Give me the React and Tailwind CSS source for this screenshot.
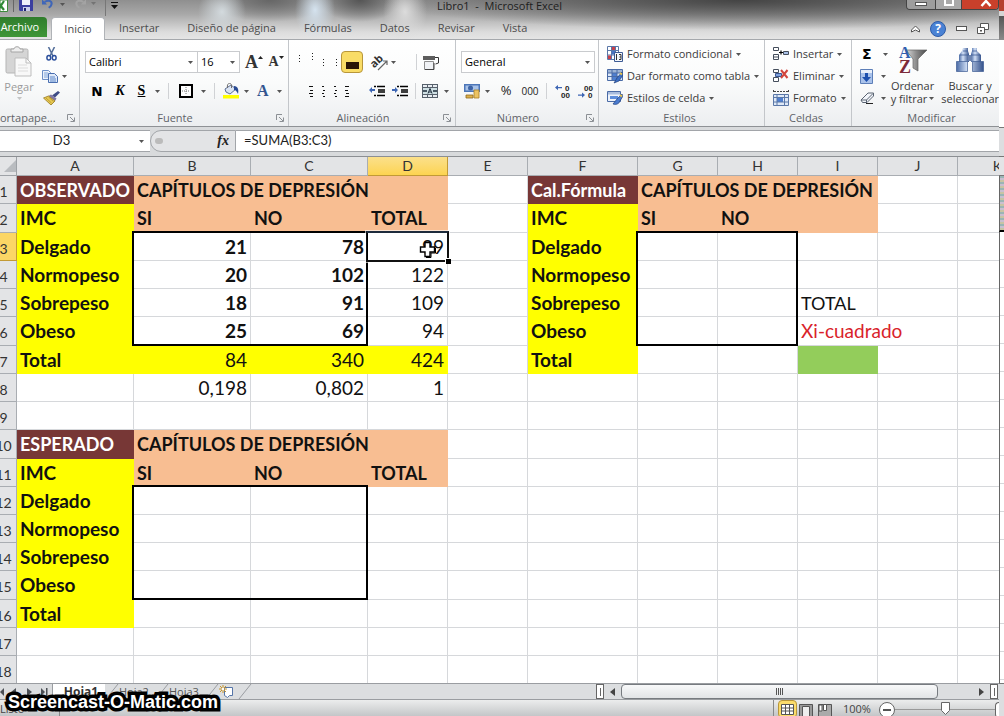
import { useState } from "react";
import clsx from "clsx";

const UI_FONT = "font-['Open_Sans','Noto_Sans',sans-serif]";
const CELL_FONT = "font-['Lato','Open_Sans',sans-serif]";

const TABS = ["Inicio", "Insertar", "Diseño de página", "Fórmulas", "Datos", "Revisar", "Vista"];

const COLUMNS = [
  { name: "A", width: "w-[117px]" },
  { name: "B", width: "w-[117px]" },
  { name: "C", width: "w-[117px]" },
  { name: "D", width: "w-[80px]" },
  { name: "E", width: "w-[80px]" },
  { name: "F", width: "w-[110px]" },
  { name: "G", width: "w-[80px]" },
  { name: "H", width: "w-[80px]" },
  { name: "I", width: "w-[80px]" },
  { name: "J", width: "w-[80px]" },
  { name: "K", width: "w-[80px]" },
];

// cell looks
const blank = { v: "" };
const title = (v) => ({ v, look: "bg-[#773736] border-[#773736] text-white text-lg font-bold" });
const yellow = (v) => ({ v, look: "bg-[#ffff00] border-[#ffff00] font-bold" });
const peach = (v, span) => ({ v, span, look: "bg-[#f8be92] border-[#f8be92] text-lg font-bold" });
const num = (v) => ({ v, look: "text-right" });
const boldNum = (v) => ({ v, look: "text-right font-bold" });
const totalNum = (v) => ({ v, look: "text-right bg-[#ffff00] border-[#ffff00]" });
const blanks = (n) => Array(n).fill(blank);

const ROWS = [
  [title("OBSERVADO"), peach("CAPÍTULOS DE DEPRESIÓN", 3), blank, title("Cal.Fórmula"), peach("CAPÍTULOS DE DEPRESIÓN", 3), ...blanks(2)],
  [yellow("IMC"), peach("SI"), peach("NO"), peach("TOTAL"), blank, yellow("IMC"), peach("SI"), peach("NO"), peach(""), ...blanks(2)],
  [yellow("Delgado"), { ...boldNum("21"), box: "wide" }, boldNum("78"), { ...num("99"), active: true }, blank, yellow("Delgado"), { v: "", box: "narrow" }, ...blanks(4)],
  [yellow("Normopeso"), boldNum("20"), boldNum("102"), num("122"), blank, yellow("Normopeso"), ...blanks(5)],
  [yellow("Sobrepeso"), boldNum("18"), boldNum("91"), num("109"), blank, yellow("Sobrepeso"), ...blanks(2), { v: "TOTAL", look: "text-lg" }, ...blanks(2)],
  [yellow("Obeso"), boldNum("25"), boldNum("69"), num("94"), blank, yellow("Obeso"), ...blanks(2), { v: "Xi-cuadrado", span: 2, look: "text-[#d9222a]" }, blank],
  [yellow("Total"), totalNum("84"), totalNum("340"), totalNum("424"), blank, yellow("Total"), ...blanks(2), { v: "", look: "bg-[#93cd5b] border-[#93cd5b]" }, ...blanks(2)],
  [blank, num("0,198"), num("0,802"), num("1"), ...blanks(7)],
  blanks(11),
  [title("ESPERADO"), peach("CAPÍTULOS DE DEPRESIÓN", 3), ...blanks(7)],
  [yellow("IMC"), peach("SI"), peach("NO"), peach("TOTAL"), ...blanks(7)],
  [yellow("Delgado"), { v: "", box: "wide" }, ...blanks(9)],
  [yellow("Normopeso"), ...blanks(10)],
  [yellow("Sobrepeso"), ...blanks(10)],
  [yellow("Obeso"), ...blanks(10)],
  [yellow("Total"), ...blanks(10)],
  blanks(11),
  blanks(11),
];

const TALL_ROWS = [2, 6, 10, 15];

const Arrow = ({ className }) => (
  <svg viewBox="0 0 5 3" className={clsx("h-[3px] w-[5px] shrink-0", className)} aria-hidden="true">
    <path d="M0 0h5L2.5 3z" fill="#555" />
  </svg>
);

const Divider = () => <span className="h-4 w-px shrink-0 bg-[#d0d2d5]" />;

const Group = ({ label, launcher, labelClass, className, children }) => (
  <section className={clsx("flex shrink-0 flex-col overflow-hidden border-r border-[#c3c6ca]", className)}>
    <div className="h-[70px]">{children}</div>
    <div className="flex h-4 items-center pr-1">
      <span className={clsx("flex-1 text-[11px] leading-4 whitespace-nowrap text-[#5f6368]", labelClass || "text-center", launcher && "pr-1.5")}>{label}</span>
      {launcher && (
        <button type="button" aria-label={`Opciones de ${label}`}>
          <svg width="8" height="8" viewBox="0 0 8 8">
            <path d="M0.5 6V0.5H6M3 3l4 4M7.5 3.5v4h-4" fill="none" stroke="#8b8f94" />
          </svg>
        </button>
      )}
    </div>
  </section>
);

const IconButton = ({ label, className, children }) => (
  <button type="button" aria-label={label} className={clsx("flex h-[22px] shrink-0 items-center justify-center", className)}>
    {children}
  </button>
);

const RowButton = ({ icon, children }) => (
  <button type="button" className="flex h-[22px] items-center gap-1 text-[11px] whitespace-nowrap text-[#3b3b3b]">
    {icon}
    <span>{children}</span>
    <Arrow />
  </button>
);

/* ---------- icons ---------- */

const ExcelIcon = () => (
  <svg width="8" height="12" viewBox="0 0 8 12">
    <path d="M0 0h7.5v11.5H0z" fill="#fff" stroke="#3c8a3c" />
    <path d="M-3 1l7 9M4 1l-6 9" stroke="#2f8a36" strokeWidth="2.2" />
  </svg>
);

const SaveIcon = () => (
  <svg width="14" height="12" viewBox="0 0 14 12">
    <path d="M0 0h14v11H1l-1-1z" fill="#3b3fa0" />
    <path d="M3 0h8v5H3z" fill="#eef0fb" />
    <path d="M4 7h7v4H4z" fill="#c9cdec" />
    <path d="M5 8h2v3H5z" fill="#20246e" />
  </svg>
);

const UndoIcon = ({ color }) => (
  <svg width="12" height="10" viewBox="0 0 14 11">
    <path d="M3 3c6-3 9 0 8 3-.5 2-2 3-3 4" fill="none" stroke={color} strokeWidth="2.4" />
    <path d="M0 0v6h6z" fill={color} />
  </svg>
);

const PasteIcon = () => (
  <svg width="28" height="31" viewBox="0 0 28 31">
    <rect x="1" y="3" width="22" height="24" rx="1.5" fill="#d5d5d5" stroke="#b5b5b5" />
    <path d="M6 6h12V3h-3c0-3-6-3-6 0H6z" fill="#eee" stroke="#a5a5a5" />
    <path d="M10 12h11l5 5v13H10z" fill="#f8f8f8" stroke="#bdbdbd" />
    <path d="M21 12v5h5" fill="none" stroke="#bdbdbd" />
    <path d="M13 19h9M13 22h10M13 25h10" stroke="#dcdcdc" />
  </svg>
);

const CutIcon = () => (
  <svg width="11" height="14" viewBox="0 0 11 14">
    <path d="M2.5 0l4.5 9M8.5 0L4 9" stroke="#56709b" strokeWidth="1.6" />
    <ellipse cx="2.8" cy="10.8" rx="1.9" ry="2.3" fill="none" stroke="#2b4f9c" strokeWidth="1.5" />
    <ellipse cx="8.2" cy="10.8" rx="1.9" ry="2.3" fill="none" stroke="#2b4f9c" strokeWidth="1.5" />
  </svg>
);

const CopyIcon = () => (
  <svg width="16" height="13" viewBox="0 0 16 13">
    <path d="M0.5 0.5h6l2 2v7h-8z" fill="#eaf1fb" stroke="#6c8fc7" />
    <path d="M2 3h4M2 5h4M2 7h4" stroke="#7fa3d8" />
    <path d="M6.5 3.5h6l3 3v6h-9z" fill="#dfeafa" stroke="#4a6fb0" />
    <path d="M8 7h5M8 9h6M8 11h6" stroke="#5c87c8" />
  </svg>
);

const BrushIcon = () => (
  <svg width="17" height="14" viewBox="0 0 17 14">
    <path d="M15 0l2 1.600-5 5-3-2z" fill="#3e4c86" />
    <path d="M8 3.500l5.500 4-1.500 2.500L5.500 5z" fill="#8178a4" />
    <path d="M5.500 5l6.500 5-4 4L0.500 7z" fill="#e8ca52" stroke="#94761f" strokeWidth="0.8" />
    <path d="M3 7l5.500 5M5.500 6l5 4.500" stroke="#b38f2d" strokeWidth="0.8" />
  </svg>
);

const BordersIcon = () => (
  <svg width="14" height="14" viewBox="0 0 14 14">
    <rect x="1" y="1" width="12" height="12" fill="#fff" stroke="#000" strokeWidth="2" />
    <path d="M7 3v8M3 7h8" stroke="#777" strokeDasharray="1 1" />
  </svg>
);

const BucketIcon = () => (
  <svg width="17" height="16" viewBox="0 0 17 16">
    <path d="M2 6l6-4 5 4-6 5-4-2z" fill="#dbe4f3" stroke="#5d6f96" />
    <path d="M4.500 5c-1-5 3-6 4-3v3" fill="none" stroke="#6d6d6d" />
    <path d="M11 3c4 0 5 4 4 8-1-2-2-4-4-4z" fill="#2a4b93" />
    <path d="M0 12h16v3.500H0z" fill="#ffff00" />
  </svg>
);

const OrientationIcon = () => (
  <svg width="18" height="18" viewBox="0 0 18 18" className="overflow-visible">
    <text x="0" y="12" fontSize="11" fontWeight="700" fontFamily="Open Sans" fill="#333" transform="rotate(-42 6 10)">ab</text>
    <path d="M7 17l9-9M16 12V8h-4" fill="none" stroke="#666" strokeWidth="1.200" />
  </svg>
);

const WrapIcon = () => (
  <svg width="16" height="15" viewBox="0 0 16 15">
    <path d="M0 1h12v4H0z" fill="#5d5d5d" />
    <path d="M12 2.500h3.500V8l-3 1" fill="none" stroke="#333" />
    <path d="M1.500 6.500h9v8h-9z" fill="#f0f2f5" stroke="#8d8d8d" />
    <path d="M2 14.500h9V8" fill="none" stroke="#444" />
  </svg>
);

const MergeIcon = () => (
  <svg width="16" height="14" viewBox="0 0 16 14">
    <path d="M0 0h16v14H0z" fill="#56606b" />
    <path d="M1 1h4v2H1zM6 1h4v2H6zM11 1h4v2h-4zM1 11h4v2H1zM6 11h4v2H6zM11 11h4v2h-4z" fill="#e8edf2" />
    <path d="M1 4h14v6H1z" fill="#cfe0e4" />
    <path d="M1 7h4M15 7h-4" stroke="#1c2b3a" strokeWidth="1.600" />
    <path d="M8 4.500l-2 5M8 4.500l2 5M7 8h2" stroke="#1c2b3a" />
  </svg>
);

const IndentIcon = ({ right }) => (
  <svg width="17" height="12" viewBox="0 0 17 12">
    <path d={right ? "M0 4h3V2l3 3-3 3V6H0z" : "M6 4H3V2L0 5l3 3V6h3z"} fill="#3d66b4" />
    <path d="M5 1.500h2M8 1.500h8M9 5h7M9 7h7M5 10.500h2M8 10.500h8" stroke="#000" strokeWidth="1.400" />
  </svg>
);

const CurrencyIcon = () => (
  <svg width="17" height="16" viewBox="0 0 17 16">
    <path d="M0 1h16v8H0z" fill="#4c76b8" />
    <path d="M1.500 2.500h13v5h-13z" fill="#a9c3e8" />
    <circle cx="6.500" cy="5" r="2.500" fill="#3e64a6" />
    <path d="M10 7h5v8h-5z" fill="#ecc362" stroke="#a87f26" strokeWidth="0.8" />
    <path d="M2 12h7v3H2z" fill="#dcb04c" stroke="#8f6a1c" strokeWidth="0.8" />
  </svg>
);

const DecimalIcon = ({ more }) => (
  <svg width="17" height="16" viewBox="0 0 17 16" className="overflow-visible" fontFamily="Liberation Sans" fontSize="8" fontWeight="700" fill="#222">
    {more ? (
      <>
        <path d="M0 4.500l3-2.500v2h4v1.200H3v2z" fill="#3d66b4" />
        <text x="10" y="8">0</text>
        <text x="6" y="15">00</text>
      </>
    ) : (
      <>
        <path d="M7 12l-3-2.500v2H0v1.200h4v2z" fill="#3d66b4" />
        <text x="6" y="8">00</text>
        <text x="10" y="15">0</text>
      </>
    )}
  </svg>
);

const ConditionalIcon = () => (
  <svg width="16" height="16" viewBox="0 0 16 16">
    <path d="M0.500 0.500h11v13h-11z" fill="#fff" stroke="#5a77a8" />
    <path d="M1 4.500h11M1 9h11M4.500 0v13M8.500 0v13" stroke="#5a77a8" />
    <path d="M5 1h3v3H5zM1 9.500h3v3.500H1z" fill="#c8404a" />
    <path d="M5 5h3v3.500H5z" fill="#4875c4" />
    <path d="M7.500 6.500h8v9h-8z" fill="#f4f7fb" stroke="#3d5b94" />
    <path d="M9.500 8v6M12 8.500h2v2.500h-1.500M14 11v2.500h-2" stroke="#333" fill="none" />
  </svg>
);

const TableFormatIcon = () => (
  <svg width="16" height="16" viewBox="0 0 16 16">
    <path d="M0.500 1.500h15v11h-15z" fill="#dde8f7" stroke="#4a6ba6" />
    <path d="M1 2h14v3H1z" fill="#9db4d6" />
    <path d="M5 5h5v7H5z" fill="#4f7fd0" />
    <path d="M1 5h14M1 8.500h14M5 2v10M10 2v10" stroke="#4a6ba6" />
    <path d="M15 4l-5 6-3 5 5-2 4-6z" fill="#3e70c4" stroke="#22427f" strokeWidth="0.7" />
    <path d="M13 5l2 1.500" stroke="#e8c34a" strokeWidth="2" />
  </svg>
);

const CellStyleIcon = () => (
  <svg width="16" height="16" viewBox="0 0 16 16">
    <path d="M0.500 1.500h13v10h-13z" fill="#eef3fb" stroke="#4a6ba6" />
    <path d="M1 2h12v2.500H1z" fill="#a9bdde" />
    <path d="M3 6h8v3H3z" fill="#5d8ddb" />
    <path d="M15 4l-5 5-4 5c3 1 6 0 7-3l3-5z" fill="#4a7bcf" stroke="#22427f" strokeWidth="0.7" />
    <path d="M13 5l2 1.500" stroke="#e8c34a" strokeWidth="2" />
  </svg>
);

const InsertIcon = () => (
  <svg width="16" height="14" viewBox="0 0 16 14">
    <path d="M0.500 0.500h5v3h-5zM0.500 7.500h5v5h-5zM0.500 10h5" fill="#fff" stroke="#454e5c" />
    <path d="M6 5.500h4M8 3.500v4" stroke="#000" strokeWidth="1.200" />
    <path d="M10.500 4.500h5v3h-5z" fill="#a8bfe6" stroke="#454e5c" />
  </svg>
);

const DeleteIcon = () => (
  <svg width="16" height="14" viewBox="0 0 16 14">
    <path d="M0.500 0.500h5v3h-5zM0.500 8.500h5v4h-5z" fill="#fff" stroke="#454e5c" />
    <path d="M2.500 4.500h6v3h-6z" fill="#7fa2dc" stroke="#3a5590" />
    <path d="M8 1l6.500 8M14.500 1L8 9" stroke="#d2453d" strokeWidth="2" />
  </svg>
);

const FormatIcon = () => (
  <svg width="16" height="16" viewBox="0 0 16 16">
    <path d="M0.500 0v3M15.500 0v3M1 1.500h14" stroke="#444" strokeDasharray="2 1" />
    <path d="M0.500 4.500h15v11h-15z" fill="#dfe9f7" stroke="#5b78a8" />
    <path d="M4 7h6v5H4z" fill="#4f7fd0" />
    <path d="M4 4v11M11.500 4v11M1 7.500h14M1 12h14" stroke="#5b78a8" />
  </svg>
);

const FillIcon = () => (
  <svg width="13" height="15" viewBox="0 0 13 15">
    <path d="M0.500 0.500h12v14h-12z" fill="#e8effa" stroke="#5d7fb8" />
    <path d="M1 4h11v10H1z" fill="#a9c2ea" />
    <path d="M5 4h3v4h3l-4.500 5L2 8h3z" fill="#1c4fae" />
  </svg>
);

const EraserIcon = () => (
  <svg width="15" height="12" viewBox="0 0 15 12">
    <path d="M1 8l7-7h5.500v3L7 10.500H2.500z" fill="#f3f6fb" stroke="#5a6472" />
    <path d="M1 8h5.500L13 1.500M6.500 8v2.500" fill="none" stroke="#5a6472" />
    <path d="M6 11.500h7" stroke="#222" />
  </svg>
);

const SortFilterIcon = () => (
  <svg width="30" height="30" viewBox="0 0 30 30" fontFamily="Liberation Serif" fontWeight="700">
    <defs>
      <linearGradient id="funnel">
        <stop offset="0" stopColor="#d9d9d9" />
        <stop offset="0.5" stopColor="#8a8a8a" />
        <stop offset="1" stopColor="#4a4a4a" />
      </linearGradient>
    </defs>
    <path d="M8 5h21l-9 9v12l-5-3v-9z" fill="url(#funnel)" stroke="#666" strokeWidth="0.7" />
    <text x="1" y="13" fontSize="16" fill="#2f5fae">A</text>
    <text x="1" y="28" fontSize="18" fill="#7d2a3a">Z</text>
  </svg>
);

const BinocularsIcon = () => (
  <svg width="28" height="26" viewBox="0 0 28 26">
    <defs>
      <linearGradient id="tube">
        <stop offset="0" stopColor="#4a6ba6" />
        <stop offset="0.4" stopColor="#d2e0f6" />
        <stop offset="1" stopColor="#34528c" />
      </linearGradient>
    </defs>
    <path d="M7 1h5v3l1 3v8H3V8l3-4z" fill="url(#tube)" />
    <path d="M16 1h5v3l4 4v7H15V7l1-3z" fill="url(#tube)" />
    <path d="M0.500 14.500h11v10h-11zM16.500 14.500h11v10h-11z" fill="url(#tube)" stroke="#3d5b94" strokeWidth="0.7" />
    <path d="M12 8h4v6h-4z" fill="#6c84b0" />
    <path d="M7 4h5M16 4h5M4 8h9M15 8h9" stroke="#3d5b94" strokeWidth="0.8" />
  </svg>
);

const CrossCursor = () => (
  <svg width="17" height="17" viewBox="0 0 17 17" className="pointer-events-none absolute top-2 left-[51px]">
    <path d="M6 1.500h5v4.500h4.500v5H11v4.500H6V11H1.500V6H6z" fill="#fff" stroke="#000" strokeWidth="1.400" />
    <path d="M7 16.500h5V12h4.500V7" fill="none" stroke="#000" />
  </svg>
);

const Slant = () => (
  <svg width="14" height="15" viewBox="0 0 14 15" className="shrink-0" aria-hidden="true">
    <path d="M1 15L13 0" stroke="#9a9da1" fill="none" />
  </svg>
);

/* ---------- window parts ---------- */

const TitleBar = () => (
  <header className="relative flex h-[18px] items-start justify-between">
    <div className="flex items-start gap-[5px]">
      <ExcelIcon />
      <span className="h-3 w-px bg-[#666]" />
      <IconButton label="Guardar" className="h-3!"><SaveIcon /></IconButton>
      <IconButton label="Deshacer" className="ml-1 h-2! gap-1.5"><UndoIcon color="#3f66b8" /><Arrow /></IconButton>
      <IconButton label="Rehacer" className="ml-1 h-2! -scale-x-100"><UndoIcon color="#a3a3a3" /></IconButton>
      <Arrow className="mt-0.5 opacity-50" />
      <span className="ml-1 h-4 w-px bg-[#777]" />
      <button type="button" aria-label="Personalizar barra" className="mt-0.5">
        <svg width="7" height="7" viewBox="0 0 7 7"><path d="M0 0.500h7" stroke="#111" /><path d="M0 3h7L3.500 7z" fill="#111" /></svg>
      </button>
    </div>
    <h1 className="absolute inset-x-0 top-0 text-center text-[11px] leading-[11px] text-[#1d1d1d]">Libro1&nbsp; -&nbsp; Microsoft Excel</h1>
    <div className="relative flex h-2.5 overflow-hidden rounded-b border border-t-0 border-[#444]">
      <button type="button" aria-label="Minimizar" className="flex w-7 justify-center bg-[#9d9d9d]"><span className="mt-0.5 h-1 w-3 border border-[#555] bg-white" /></button>
      <button type="button" aria-label="Restaurar" className="flex w-[27px] justify-center border-x border-[#444] bg-[#a9a9a9]"><span className="h-1.5 w-2.5 border-2 border-t-0 border-white" /></button>
      <button type="button" aria-label="Cerrar" className="flex w-9 justify-center bg-[#c9402b] pl-3">
        <svg width="12" height="7" viewBox="0 0 12 7"><path d="M1.500 6L6 1l4.500 5" fill="none" stroke="#fff" strokeWidth="2.500" /></svg>
      </button>
    </div>
  </header>
);

const RibbonTabs = () => (
  <nav className="flex h-[22px] border-b border-[#a5a8ac] text-[11px] text-[#4c4c4c]">
    <button type="button" className="-mt-px mb-0.5 w-[47px] shrink-0 rounded-tr bg-linear-to-b from-[#2f7d2c] to-[#3f9638] pr-2 text-right whitespace-nowrap text-white">
      Archivo
    </button>
    {TABS.map((t, i) => (
      <button
        key={t}
        type="button"
        className={clsx(
          "shrink-0 px-3.5 whitespace-nowrap",
          i === 0 && "-mt-px -mb-px ml-1 w-[54px] rounded-t-sm border border-b-0 border-[#b0b3b7] bg-white px-0!"
        )}
      >
        {t}
      </button>
    ))}
    <div className="ml-auto flex items-center gap-2.5 pr-2.5">
      <button type="button" aria-label="Contraer cinta">
        <svg width="9" height="8" viewBox="0 0 9 8"><path d="M0.500 5L4.500 1l4 4v2l-4-2-4 2z" fill="#fff" stroke="#555" /></svg>
      </button>
      <button type="button" aria-label="Ayuda" className="flex h-4 w-4 items-center justify-center rounded-full border border-[#2c5ba8] bg-[#4a82d4] text-xs font-bold text-white">?</button>
      <button type="button" aria-label="Minimizar libro" className="h-[5px] w-[11px] border border-[#555] bg-white" />
      <button type="button" aria-label="Restaurar libro">
        <svg width="12" height="11" viewBox="0 0 12 11"><path d="M3.500 0.500h8v6h-8z" fill="#fff" stroke="#555" /><path d="M0.500 4.500h7v6h-7z" fill="#fff" stroke="#555" /><path d="M3 7h2v1.500H3z" fill="#555" /></svg>
      </button>
    </div>
  </nav>
);

const Combo = ({ label, value, className }) => (
  <label className={clsx("flex h-[22px] items-center border border-[#c9cbce] bg-white pr-1", className)}>
    <input aria-label={label} defaultValue={value} className="w-full min-w-0 bg-transparent pl-[3px] text-[11px] text-black outline-none" />
    <Arrow />
  </label>
);

const Ribbon = () => (
  <div className="flex h-[87px] overflow-hidden border-b border-[#8e9195] bg-linear-to-b from-white via-[#fafbfb] to-[#eceef0]">
    <Group label="ortapape..." launcher labelClass="text-left" className="w-20">
      <div className="flex pt-[3px]">
        <button type="button" className="flex w-[42px] flex-col items-center pr-1 pt-[3px] text-[11px] leading-4 text-[#9b9b9b]">
          <PasteIcon />
          <span className="mt-0.5">Pegar</span>
          <Arrow className="mt-0.5 opacity-30" />
        </button>
        <div className="flex flex-col">
          <IconButton label="Cortar" className="w-[18px]"><CutIcon /></IconButton>
          <IconButton label="Copiar" className="gap-1"><CopyIcon /><Arrow /></IconButton>
          <IconButton label="Copiar formato" className="w-[18px]"><BrushIcon /></IconButton>
        </div>
      </div>
    </Group>

    <Group label="Fuente" launcher className="w-[209px]">
      <div className="flex pt-[11px] pl-[5px]">
        <Combo label="Fuente" value="Calibri" className="w-[113px]" />
        <Combo label="Tamaño" value="16" className="-ml-px w-[43px]" />
        <IconButton label="Aumentar fuente" className="ml-1 w-5">
          <span className="font-['Liberation_Serif',serif] text-lg leading-none font-bold text-[#333]">A</span>
          <svg width="5" height="3" viewBox="0 0 5 3" className="mb-2.5"><path d="M0 3l2.500-3L5 3z" fill="#222" /></svg>
        </IconButton>
        <IconButton label="Disminuir fuente" className="ml-0.5 w-5">
          <span className="font-['Liberation_Serif',serif] text-sm leading-none font-bold text-[#333]">A</span>
          <svg width="5" height="3" viewBox="0 0 5 3" className="mb-2.5"><path d="M0 0l2.500 3L5 0z" fill="#222" /></svg>
        </IconButton>
      </div>
      <div className="flex items-center pt-[7px] pl-1.5 font-['Liberation_Serif',serif] text-sm text-black">
        <IconButton label="Negrita" className="w-[22px] font-['Open_Sans',sans-serif] text-[13px] font-extrabold">N</IconButton>
        <IconButton label="Cursiva" className="w-6 font-bold italic">K</IconButton>
        <IconButton label="Subrayado" className="w-[34px] gap-2.5 font-bold"><span className="underline">S</span><Arrow /></IconButton>
        <span className="w-0.5" />
        <Divider />
        <IconButton label="Bordes" className="ml-2.5 gap-2"><BordersIcon /><Arrow /></IconButton>
        <span className="w-2" />
        <Divider />
        <IconButton label="Color de relleno" className="ml-2 gap-1"><BucketIcon /><Arrow /></IconButton>
        <IconButton label="Color de fuente" className="ml-2 gap-2 text-base font-bold text-[#33558f]">A<Arrow /></IconButton>
      </div>
    </Group>

    <Group label="Alineación" launcher className="w-[167px]">
      <div className="flex items-center pt-[11px] pl-2">
        <svg width="44" height="22" viewBox="0 0 44 22" aria-hidden="true" className="shrink-0">
          <path d="M2.500 4v7M15.500 2v9M26.500 8v7M39.500 8v7" stroke="#222" strokeDasharray="1 2" />
        </svg>
        <IconButton label="Alinear abajo" className="w-[22px] rounded-sm border border-[#b8963a] bg-[#f9dc66]">
          <span className="mt-1.5 h-[7px] w-[13px] bg-[#2a1606]" />
        </IconButton>
        <IconButton label="Orientación" className="ml-2 gap-0.5"><OrientationIcon /><Arrow /></IconButton>
        <span className="w-5" />
        <Divider />
        <IconButton label="Ajustar texto" className="ml-1.5"><WrapIcon /></IconButton>
      </div>
      <div className="flex items-center pt-[7px] pl-5">
        <svg width="44" height="14" viewBox="0 0 44 14" aria-hidden="true" className="shrink-0">
          <path d="M0 2.500h4M1 6.500h3M0 9.500h4M1 12.500h3M13 2.500h2M14 6.500h2M13 9.500h2M14 12.500h2M25 2.500h2M26 6.500h2M25 9.500h2M26 12.500h2M36 2.500h4M36 6.500h3M37 9.500h3M36 12.500h4" stroke="#111" />
        </svg>
        <IconButton label="Disminuir sangría" className="ml-4"><IndentIcon /></IconButton>
        <IconButton label="Aumentar sangría" className="ml-1.5"><IndentIcon right /></IconButton>
        <span className="w-1.5" />
        <Divider />
        <IconButton label="Combinar" className="ml-1.5 gap-1.5"><MergeIcon /><Arrow /></IconButton>
      </div>
    </Group>

    <Group label="Número" launcher className="w-[143px]">
      <div className="flex pt-[11px] pl-[5px]">
        <Combo label="Formato de número" value="General" className="w-[134px]" />
      </div>
      <div className="flex items-center pt-[7px] pl-2 text-[#222]">
        <IconButton label="Moneda" className="gap-1"><CurrencyIcon /><Arrow /></IconButton>
        <IconButton label="Porcentaje" className="ml-2 w-4 text-[13px]">%</IconButton>
        <IconButton label="Millares" className="ml-1.5 w-5 font-['Open_Sans',sans-serif] text-[10px] leading-none">000</IconButton>
        <span className="w-1.5" />
        <Divider />
        <IconButton label="Aumentar decimales" className="ml-2"><DecimalIcon more /></IconButton>
        <IconButton label="Disminuir decimales" className="ml-1.5"><DecimalIcon /></IconButton>
      </div>
    </Group>

    <Group label="Estilos" className="w-[166px]">
      <div className="flex flex-col items-start pt-[3px] pl-2">
        <RowButton icon={<ConditionalIcon />}>Formato condicional</RowButton>
        <RowButton icon={<TableFormatIcon />}>Dar formato como tabla</RowButton>
        <RowButton icon={<CellStyleIcon />}>Estilos de celda</RowButton>
      </div>
    </Group>

    <Group label="Celdas" className="w-[87px]">
      <div className="flex flex-col items-start pt-[3px] pl-2">
        <RowButton icon={<InsertIcon />}>Insertar</RowButton>
        <RowButton icon={<DeleteIcon />}>Eliminar</RowButton>
        <RowButton icon={<FormatIcon />}>Formato</RowButton>
      </div>
    </Group>

    <Group label="Modificar" labelClass="pl-4 text-center" className="min-w-[147px] flex-1 border-r-0">
      <div className="flex pt-[3px] pl-2">
        <div className="flex w-7 flex-col">
          <IconButton label="Autosuma" className="justify-between!"><span className="pl-0.5 font-['DejaVu_Sans',sans-serif] text-sm font-bold text-black">Σ</span><Arrow /></IconButton>
          <IconButton label="Rellenar" className="justify-between!"><FillIcon /><Arrow className="mr-0.5" /></IconButton>
          <IconButton label="Borrar" className="justify-between!"><EraserIcon /><Arrow className="mr-0.5" /></IconButton>
        </div>
        <button type="button" className="flex w-[50px] flex-col items-center pt-0.5 text-[11px] leading-[13px] whitespace-nowrap text-[#3b3b3b]">
          <SortFilterIcon />
          <span className="mt-1">Ordenar</span>
          <span className="flex items-center gap-0.5">y filtrar<Arrow /></span>
        </button>
        <button type="button" className="ml-1 flex w-[58px] flex-col items-center pt-1 text-[11px] leading-[13px] whitespace-nowrap text-[#3b3b3b]">
          <BinocularsIcon />
          <span className="mt-1.5">Buscar y</span>
          <span>seleccionar</span>
        </button>
      </div>
    </Group>
  </div>
);

const FormulaBar = ({ formula, onChange }) => (
  <div className={clsx("flex h-[30px] border-b border-[#8c8f93] bg-[#d8dadc] pt-[3px] pb-1 text-[13px] text-[#222]", CELL_FONT)}>
    <label className="flex w-[150px] shrink-0 items-center border-y border-[#a2a5a9] bg-white pr-1.5">
      <input aria-label="Cuadro de nombres" defaultValue="D3" className="w-full min-w-0 bg-transparent pr-4 text-center outline-none" />
      <Arrow />
    </label>
    <div className="flex w-[86px] shrink-0 items-center justify-between rounded-l-full border border-[#a2a5a9] bg-[#e3e4e6] pr-1.5 pl-1">
      <span className="h-1.5 w-2 rounded-sm bg-[#bbb]" />
      <button type="button" className="font-['Liberation_Serif',serif] text-sm leading-none font-bold italic">fx</button>
    </div>
    <input
      aria-label="Barra de fórmulas"
      value={formula}
      onChange={(e) => onChange(e.target.value)}
      className="min-w-0 flex-1 border-y border-[#a2a5a9] bg-white pl-2 outline-none"
    />
  </div>
);

const Cell = ({ cell }) => (
  <td
    colSpan={cell.span}
    className={clsx(
      "relative border-r border-b px-[3px] py-0 align-middle leading-6 whitespace-nowrap",
      cell.look?.includes("border-") ? cell.look : clsx("border-[#d6d8db]", cell.look)
    )}
  >
    {cell.v}
    {cell.box && (
      <span
        className={clsx(
          "pointer-events-none absolute -top-0.5 -left-0.5 z-10 h-[115px] border-2 border-black",
          cell.box === "wide" ? "w-[236px]" : "w-[162px]"
        )}
      />
    )}
    {cell.active && (
      <>
        <span className="pointer-events-none absolute -inset-0.5 z-20 border-2 border-l border-t-[#1d2b3c] border-r-[#111] border-b-[#111] border-l-[#111] outline outline-white/60" />
        <span className="absolute -right-1 -bottom-1 z-20 h-1.5 w-1.5 border-t border-l border-white bg-black" />
        <CrossCursor />
      </>
    )}
  </td>
);

const Sheet = () => (
  <main className="min-h-0 flex-1 overflow-hidden bg-white">
    <table className={clsx("w-full table-fixed border-separate border-spacing-0 text-[19px] text-[#111]", CELL_FONT)}>
      <thead>
        <tr className="h-[19px] text-sm leading-[18px] text-[#333]">
          <th className="w-[17px] border-r border-b border-[#9ea2a7] bg-[#e3e4e6] p-0">
            <svg width="12" height="12" viewBox="0 0 12 12" className="ml-auto"><path d="M12 0v12H0z" fill="#b9bcc0" /></svg>
          </th>
          {COLUMNS.map((c) => (
            <th
              key={c.name}
              scope="col"
              className={clsx(
                c.width,
                "border-r border-b p-0 font-normal",
                c.name === "D" ? "border-[#c29a35] bg-linear-to-b from-[#fbe08a] to-[#fdd44f]" : "border-[#a9adb2] bg-[#e3e4e6]"
              )}
            >
              {c.name}
            </th>
          ))}
        </tr>
      </thead>
      <tbody>
        {ROWS.map((cells, r) => (
          <tr key={r} className={TALL_ROWS.includes(r + 1) ? "h-[29px]" : "h-7"}>
            <th
              scope="row"
              className={clsx(
                "overflow-hidden border-r border-b p-0 text-sm font-normal text-[#333]",
                r === 2 ? "border-[#c29a35] bg-[#fbd665]" : "border-[#a9adb2] bg-[#e3e4e6]"
              )}
            >
              <span className="-ml-2.5 block w-[27px] pt-1 text-center">{r + 1}</span>
            </th>
            {cells.map((cell, c) => (
              <Cell key={c} cell={cell} />
            ))}
          </tr>
        ))}
      </tbody>
    </table>
  </main>
);

const SheetBar = () => (
  <div className="flex h-[17px] shrink-0 border-y border-[#9a9da1] bg-[#dcdee0]">
    <div className="flex w-[53px] shrink-0 items-center border-r border-[#9a9da1]">
      <svg width="48" height="8" viewBox="0 0 48 8" aria-hidden="true">
        <path d="M4 0v8L0 4zM16 0v8l-5-4zM27 0v8l5-4zM41 0v8l4-4zM46 0h1.500v8H46z" fill="#4b4f55" />
      </svg>
    </div>
    <button type="button" className="w-[52px] bg-white pl-1 text-xs leading-[15px] font-bold text-[#333]">Hoja1</button>
    <Slant />
    <button type="button" className="pr-1.5 text-[11px] leading-[15px] text-[#555]">Hoja2</button>
    <Slant />
    <button type="button" className="pr-1.5 text-[11px] leading-[15px] text-[#555]">Hoja3</button>
    <Slant />
    <button type="button" aria-label="Insertar hoja" className="pr-1">
      <svg width="15" height="13" viewBox="0 0 15 13">
        <path d="M5.500 2.500h8v8h-3l-2 2-3-2z" fill="#fff" stroke="#5575a8" />
        <path d="M4 0v8M0 4h8M1 1l6 6M7 1L1 7" stroke="#c8952a" />
        <circle cx="4" cy="4" r="1.200" fill="#fff" />
      </svg>
    </button>
    <Slant />
    <div className="ml-auto flex w-[403px] shrink-0 items-center pr-px">
      <span className="flex h-[15px] w-2 items-center justify-center border border-[#666] bg-white"><span className="h-2 w-px bg-[#666]" /></span>
      <button type="button" aria-label="Desplazar a la izquierda" className="ml-1.5">
        <svg width="5" height="8" viewBox="0 0 5 8"><path d="M5 0v8L0 4z" fill="#444" /></svg>
      </button>
      <div className="ml-1.5 flex h-[15px] w-[317px] items-center justify-center gap-px rounded-sm border border-[#777b80] bg-linear-to-b from-[#f8f9fa] to-[#e2e4e6]">
        <span className="h-[7px] w-px bg-[#555]" />
        <span className="h-[7px] w-px bg-[#555]" />
        <span className="h-[7px] w-px bg-[#555]" />
        <span className="h-[7px] w-px bg-[#555]" />
      </div>
      <button type="button" aria-label="Desplazar a la derecha" className="ml-auto">
        <svg width="5" height="8" viewBox="0 0 5 8"><path d="M0 0v8l5-4z" fill="#444" /></svg>
      </button>
      <span className="ml-1.5 flex h-[15px] w-2 items-center justify-center border border-[#666] bg-white"><span className="h-2 w-px bg-[#666]" /></span>
    </div>
  </div>
);

const StatusBar = () => (
  <footer className="flex h-4 shrink-0 overflow-hidden bg-linear-to-b from-[#eceded] to-[#c4c6c8] text-[11px] leading-[18px] text-[#444]">
    <span className="w-[60px] border-r border-[#888]">Listo</span>
    <div className="ml-auto flex w-[226px] shrink-0 items-start border-l border-[#888] pl-1">
      <button type="button" aria-label="Normal" className="flex h-[18px] w-[19px] items-center justify-center rounded-sm border border-[#b8963a] bg-[#fbdc6c]">
        <svg width="13" height="11" viewBox="0 0 13 11"><path d="M0.500 0.500h12v10h-12zM0 4h13M0 7h13M4.500 0v11M8.500 0v11" fill="#fff" stroke="#555" /></svg>
      </button>
      <button type="button" aria-label="Diseño de página" className="mt-1 ml-0.5">
        <svg width="14" height="12" viewBox="0 0 14 12"><path d="M0.500 0.500h13v12h-13z" fill="#999" stroke="#555" /><path d="M3.500 2.500h7v10h-7z" fill="#eee" stroke="#555" /></svg>
      </button>
      <button type="button" aria-label="Salto de página" className="mt-1 ml-[5px]">
        <svg width="14" height="12" viewBox="0 0 14 12"><path d="M0.500 0.500h13v12h-13z" fill="#aaa" stroke="#555" /><path d="M1 1h3v6H1zM5.500 0.500h3v6h-3z" fill="#fff" stroke="#555" /></svg>
      </button>
      <span className="ml-[11px] w-7 whitespace-nowrap">100%</span>
      <button type="button" aria-label="Alejar" className="mt-0.5 ml-2 flex h-4 w-4 shrink-0 items-center justify-center rounded-full border border-[#666] bg-white"><span className="h-0.5 w-2 bg-[#555]" /></button>
      <div className="flex flex-1 justify-center">
        <span className="mt-[9px] h-px flex-1 bg-[#999]" />
        <svg width="9" height="13" viewBox="0 0 9 13" className="mt-0.5"><path d="M0.500 0.500h8v8l-4 4-4-4z" fill="#fff" stroke="#666" /></svg>
        <span className="mt-[9px] h-px flex-1 bg-[#999]" />
      </div>
      <span className="mt-0.5 h-4 w-1 shrink-0 rounded-l-full border border-r-0 border-[#666] bg-white" />
    </div>
  </footer>
);

// sliver of the next window along the right edge
const EdgeStrip = () => (
  <aside className="flex w-[5px] shrink-0 flex-col bg-[#f4f4f5]">
    <div className="h-[11px] bg-[#b5402f]" />
    <div className="h-[5px] bg-[#d5d5d5]" />
    <div className="h-6 bg-linear-to-b from-[#555] to-[#8b8b8b]" />
    <div className="h-[87px] bg-white" />
    <div className="h-[30px] border-y border-[#777] bg-[#dcdee0]" />
    <div className="h-[19px] border-b border-[#777] bg-[#e3e4e6]" />
    <div className="h-14 border-b-2 border-l border-b-black border-l-[#666] bg-[repeating-linear-gradient(#9bb5b5_0_2px,#c9bfd0_2px_4px,#c8c4a4_4px_6px)]" />
    <div className="flex-1 border-l border-[#666] bg-[repeating-linear-gradient(#fff_0_27px,#d6d8db_27px_28px)]" />
    <div className="h-[33px] border-t border-[#777] bg-[#dcdee0]" />
  </aside>
);

const App = () => {
  const [formula, setFormula] = useState("=SUMA(B3:C3)");

  return (
    <div className={clsx("relative flex h-screen overflow-hidden bg-white", UI_FONT)}>
      <div className="flex min-w-0 flex-1 flex-col">
        <div className="shrink-0 bg-[radial-gradient(ellipse_20px_30px_at_315px_10px,#d5e3ef,transparent),radial-gradient(ellipse_22px_30px_at_405px_12px,#dcdcdc,transparent),radial-gradient(ellipse_24px_26px_at_222px_12px,#d3dade,transparent),radial-gradient(ellipse_360px_30px_at_740px_0px,#444,transparent),radial-gradient(ellipse_60px_22px_at_270px_0px,#666,transparent),radial-gradient(ellipse_40px_22px_at_360px_0px,#555,transparent),linear-gradient(#8f8f8f,#a8a8a8_35%,#dcdcdc_80%,#e6e6e6)]">
          <TitleBar />
          <RibbonTabs />
        </div>
        <Ribbon />
        <FormulaBar formula={formula} onChange={setFormula} />
        <Sheet />
        <SheetBar />
        <StatusBar />
      </div>
      <EdgeStrip />
      <p className="pointer-events-none absolute bottom-0 left-2 z-30 font-['Liberation_Sans',sans-serif] text-lg font-bold text-white [-webkit-text-stroke:7px_#000] [paint-order:stroke_fill]">
        Screencast-O-Matic.com
      </p>
    </div>
  );
};

export default App;
